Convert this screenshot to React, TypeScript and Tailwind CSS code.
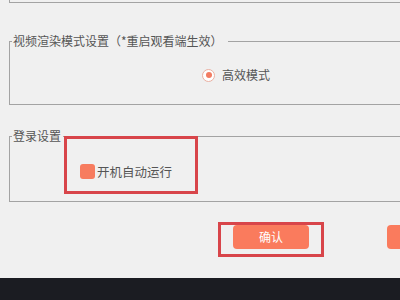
import React from 'react';

const font = { fontFamily: '"Noto Sans CJK SC", "Noto Sans", sans-serif' };

const App = () => {
  return (
    <div
      className="w-[400px] h-[300px] bg-[#f0f0f0] overflow-hidden flex flex-col text-[12px] text-[#555555]"
      style={font}
    >
      {/* bottom of the previous group */}
      <div className="h-[3px] w-[420px] ml-[9px] border-l border-b border-[#a3a3a3] shrink-0" />

      {/* video render mode */}
      <fieldset className="mt-[31px] ml-[9px] w-[420px] border border-[#a3a3a3] pt-[19px] pb-[21px] shrink-0">
        <legend className="ml-[2px] pr-[5px] pl-[1px] leading-[14px]">视频渲染模式设置（*重启观看端生效）</legend>
        <div className="flex items-center h-[16px] pl-[192px] gap-[7px]">
          <span className="w-[13px] h-[13px] rounded-full border border-[#eab0a2] bg-white flex items-center justify-center">
            <span className="w-[6px] h-[6px] rounded-full bg-[#f27c62]" />
          </span>
          <span className="leading-[16px]">高效模式</span>
        </div>
      </fieldset>

      {/* login */}
      <fieldset className="mt-[24px] ml-[9px] w-[420px] border border-[#a3a3a3] pb-[7px] shrink-0">
        <legend className="ml-[2px] pr-[2px] pl-[1px] leading-[14px]">登录设置</legend>
        <div className="mt-[-7px] ml-[54px] w-[134px] h-[58px] border-[3px] border-[#d8454a] pt-[25px] pl-[13px]">
          <div className="flex items-center gap-[2px]">
            <span className="w-[15px] h-[15px] rounded-[3px] bg-[#f77c5f] shrink-0" />
            <span className="leading-[15px] text-[12.5px]">开机自动运行</span>
          </div>
        </div>
      </fieldset>

      {/* buttons */}
      <div className="mt-[20px] flex items-start shrink-0">
        <div className="ml-[218px] w-[106px] h-[35px] border-[3px] border-[#d8454a] pl-[12px] shrink-0">
          <button className="w-[76px] h-[24px] rounded-[4px] bg-[#fa7b5d] text-white text-[12px] leading-[24px]">
            确认
          </button>
        </div>
        <div className="ml-[63px] mt-[3px] w-[76px] h-[24px] rounded-[4px] bg-[#fa7b5d] shrink-0" />
      </div>

      <div className="mt-auto h-[22px] bg-[#1b1c22] shrink-0" />
    </div>
  );
};

export default App;
